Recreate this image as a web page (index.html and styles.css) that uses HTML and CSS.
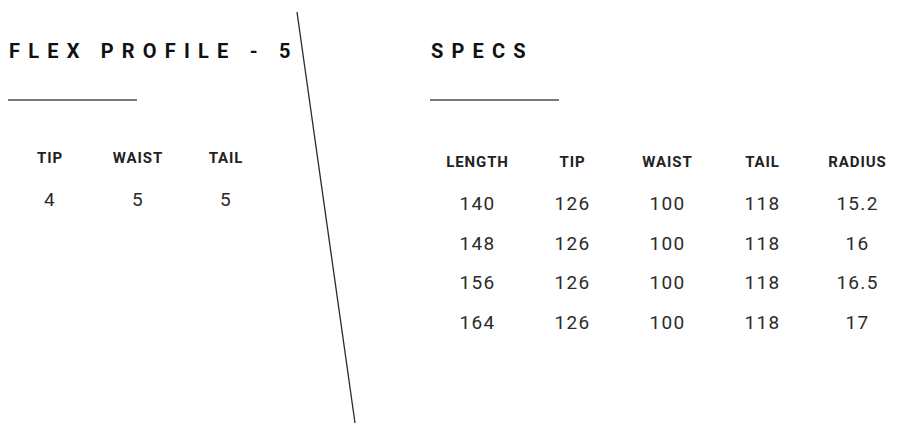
FILE: index.html
```html
<!DOCTYPE html>
<html lang="en">
<head>
<meta charset="utf-8">
<title>Flex Profile &amp; Specs</title>
<link rel="stylesheet" href="styles.css">
</head>
<body>
<main class="page">
  <section class="panel panel-flex">
    <h2 class="title">FLEX PROFILE - 5</h2>
    <div class="rule"></div>
    <div class="table table-3">
      <div class="row head"><span>TIP</span><span>WAIST</span><span>TAIL</span></div>
      <div class="body">
        <div class="row"><span>4</span><span>5</span><span>5</span></div>
      </div>
    </div>
  </section>
  <section class="panel panel-specs">
    <h2 class="title">SPECS</h2>
    <div class="rule"></div>
    <div class="table table-5">
      <div class="row head"><span>LENGTH</span><span>TIP</span><span>WAIST</span><span>TAIL</span><span>RADIUS</span></div>
      <div class="body">
        <div class="row"><span>140</span><span>126</span><span>100</span><span>118</span><span>15.2</span></div>
        <div class="row"><span>148</span><span>126</span><span>100</span><span>118</span><span>16</span></div>
        <div class="row"><span>156</span><span>126</span><span>100</span><span>118</span><span>16.5</span></div>
        <div class="row"><span>164</span><span>126</span><span>100</span><span>118</span><span>17</span></div>
      </div>
    </div>
  </section>
  <svg class="divider" width="900" height="437" viewBox="0 0 900 437" aria-hidden="true">
    <line x1="297" y1="12" x2="355" y2="423" stroke="#2a2a2a" stroke-width="1.3"/>
  </svg>
</main>
</body>
</html>
```

FILE: styles.css
```css
* { box-sizing: border-box; }
html, body {
  margin: 0;
  padding: 0;
  background: #fff;
}
body {
  font-family: Roboto, "Liberation Sans", sans-serif;
  color: #222;
  overflow: hidden;
}
.page {
  position: relative;
  width: 900px;
  height: 437px;
  display: flex;
  padding-top: 41px;
  overflow: hidden;
}
.panel {
  flex: none;
}
.panel-flex {
  width: 431px;
  padding-left: 9px;
}
.panel-specs {
  width: 469px;
}
.title {
  margin: 0;
  font-size: 20px;
  line-height: 20px;
  font-weight: 700;
  letter-spacing: 8.2px;
  color: #111;
  white-space: nowrap;
}
.rule {
  width: 129px;
  height: 2px;
  background: #7a7a7a;
  margin-top: 38px;
  margin-left: -1px;
}
.table .row {
  display: grid;
  justify-items: center;
}
.table-3 .row { grid-template-columns: repeat(3, 88px); }
.table-5 .row { grid-template-columns: repeat(5, 95px); }
.table-3 { margin-left: -3px; margin-top: 49px; }
.table-5 { margin-left: -1px; margin-top: 53px; }
.head {
  font-size: 15px;
  line-height: 16px;
  font-weight: 700;
  letter-spacing: 0.9px;
  color: #222;
}
.body {
  display: flex;
  flex-direction: column;
  gap: 19.5px;
  font-size: 19px;
  line-height: 20px;
  font-weight: 400;
  letter-spacing: 1.3px;
  color: #2b2b2b;
}
.table-3 .body { margin-top: 24px; }
.table-5 .body { margin-top: 24px; }
.divider {
  position: absolute;
  left: 0;
  top: 0;
  pointer-events: none;
}
```
